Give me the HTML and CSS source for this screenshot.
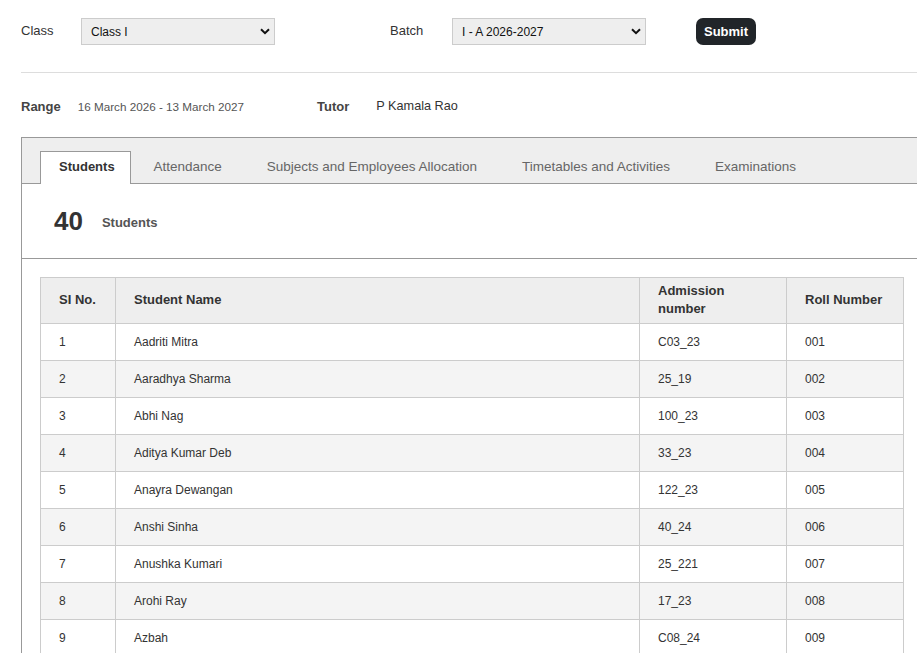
FILE: index.html
```html
<!DOCTYPE html>
<html lang="en">

<head>
    <meta charset="UTF-8">
    <meta name="viewport" content="width=device-width, initial-scale=1.0">
    <title>Class Students</title>
    <link rel="stylesheet" href="styles.css">
</head>

<body>
    <div class="page">
        <div class="filters">
            <label class="label">Class</label>
            <div class="select-wrap">
                <select class="select">
                    <option>Class I</option>
                </select>
                <svg class="chevron" width="10" height="7" viewBox="0 0 10 7">
                    <path d="M1 1.2 L5 5.2 L9 1.2" fill="none" stroke="#111" stroke-width="2" />
                </svg>
            </div>
            <label class="label label-batch">Batch</label>
            <div class="select-wrap">
                <select class="select">
                    <option>I - A 2026-2027</option>
                </select>
                <svg class="chevron" width="10" height="7" viewBox="0 0 10 7">
                    <path d="M1 1.2 L5 5.2 L9 1.2" fill="none" stroke="#111" stroke-width="2" />
                </svg>
            </div>
            <button class="btn">Submit</button>
        </div>

        <hr class="divider">

        <div class="meta">
            <span class="meta-label">Range</span>
            <span class="meta-range">16 March 2026 - 13 March 2027</span>
            <span class="meta-label meta-tutor">Tutor</span>
            <span class="meta-value">P Kamala Rao</span>
        </div>

        <div class="panel">
            <ul class="tabs">
                <li class="tab active">Students</li>
                <li class="tab">Attendance</li>
                <li class="tab">Subjects and Employees Allocation</li>
                <li class="tab">Timetables and Activities</li>
                <li class="tab">Examinations</li>
            </ul>

            <div class="count">
                <span class="count-num">40</span>
                <span class="count-text">Students</span>
            </div>

            <div class="table-box">
                <table class="students">
                    <colgroup>
                        <col style="width:75px">
                        <col style="width:524px">
                        <col style="width:147px">
                        <col style="width:117px">
                    </colgroup>
                    <thead>
                        <tr>
                            <th>SI No.</th>
                            <th>Student Name</th>
                            <th>Admission number</th>
                            <th>Roll Number</th>
                        </tr>
                    </thead>
                    <tbody>
                        <tr><td>1</td><td>Aadriti Mitra</td><td>C03_23</td><td>001</td></tr>
                        <tr><td>2</td><td>Aaradhya Sharma</td><td>25_19</td><td>002</td></tr>
                        <tr><td>3</td><td>Abhi Nag</td><td>100_23</td><td>003</td></tr>
                        <tr><td>4</td><td>Aditya Kumar Deb</td><td>33_23</td><td>004</td></tr>
                        <tr><td>5</td><td>Anayra Dewangan</td><td>122_23</td><td>005</td></tr>
                        <tr><td>6</td><td>Anshi Sinha</td><td>40_24</td><td>006</td></tr>
                        <tr><td>7</td><td>Anushka Kumari</td><td>25_221</td><td>007</td></tr>
                        <tr><td>8</td><td>Arohi Ray</td><td>17_23</td><td>008</td></tr>
                        <tr><td>9</td><td>Azbah</td><td>C08_24</td><td>009</td></tr>
                        <tr><td>10</td><td>Bhavya Singh</td><td>51_23</td><td>010</td></tr>
                        <tr><td>11</td><td>Debanshi Roy</td><td>64_23</td><td>011</td></tr>
                    </tbody>
                </table>
            </div>
        </div>
    </div>
</body>

</html>
```

FILE: styles.css
```css
* {
    margin: 0;
    padding: 0;
    box-sizing: border-box;
    list-style: none;
}

html,
body {
    overflow: hidden;
}

body {
    font-family: "Liberation Sans", Arial, sans-serif;
    color: #333;
    background: #fff;
}

.page {
    width: 922px;
    padding: 18px 0 0 21px;
}

/* top filter row */
.filters {
    display: flex;
    align-items: center;
    height: 27px;
}

.label {
    width: 60px;
    font-size: 13px;
    color: #333;
    margin-top: -3px;
}

.label-batch {
    margin-left: 115px;
    width: 62px;
}

.select-wrap {
    position: relative;
    width: 194px;
    height: 27px;
}

.select {
    appearance: none;
    -webkit-appearance: none;
    width: 100%;
    height: 100%;
    background: #eee;
    border: 1px solid #ccc;
    border-radius: 0;
    padding: 0 0 0 9px;
    font-family: "Liberation Sans", Arial, sans-serif;
    font-size: 12px;
    color: #111;
    outline: none;
}

.chevron {
    position: absolute;
    right: 5px;
    top: 10px;
    pointer-events: none;
}

.btn {
    margin-left: 50px;
    width: 60px;
    height: 27px;
    border: 0;
    border-radius: 7px;
    background: #212529;
    color: #fff;
    font-family: "Liberation Sans", Arial, sans-serif;
    font-size: 13px;
    font-weight: bold;
    margin-top: -1px;
}

.divider {
    border: 0;
    border-top: 1px solid #ddd;
    margin-top: 27px;
}

/* range / tutor */
.meta {
    display: flex;
    align-items: center;
    height: 20px;
    margin-top: 23px;
}

.meta-label {
    font-size: 13px;
    font-weight: bold;
    color: #444;
}

.meta-range {
    margin-left: 17px;
    font-size: 11.7px;
    color: #555;
}

.meta-tutor {
    margin-left: 73px;
}

.meta-value {
    margin-left: 27px;
    font-size: 12.7px;
    color: #333;
}

/* tabbed panel */
.panel {
    margin-top: 21px;
    border: 1px solid #999;
    border-right: 0;
}

.tabs {
    display: flex;
    background: #eee;
    border-bottom: 1px solid #999;
    padding: 13px 0 0 18px;
}

.tab {
    height: 33px;
    line-height: 29px;
    padding: 0 21.5px;
    margin-bottom: -1px;
    border: 1px solid transparent;
    border-bottom: 0;
    font-size: 13.5px;
    color: #666;
}

.tab.active {
    width: 91px;
    background: #fff;
    border-color: #999;
    color: #333;
    font-size: 13px;
    font-weight: bold;
    padding: 0 0 0 18px;
}

.count {
    display: flex;
    align-items: center;
    height: 75px;
    padding: 0 0 0 32px;
    border-bottom: 1px solid #999;
}

.count-num {
    font-size: 26px;
    font-weight: bold;
    color: #333;
}

.count-text {
    margin-left: 19px;
    margin-top: 2px;
    font-size: 13px;
    font-weight: bold;
    color: #555;
}

.table-box {
    padding: 18px 18px 0;
}

.students {
    width: 863px;
    table-layout: fixed;
    border-collapse: collapse;
    font-size: 12px;
    color: #333;
}

.students th,
.students td {
    border: 1px solid #ccc;
    text-align: left;
    padding: 0 18px;
}

.students th {
    background: #eee;
    font-size: 13px;
    font-weight: bold;
    line-height: 18px;
    height: 46px;
    padding-bottom: 1px;
}

.students td {
    height: 37px;
    line-height: 16px;
}

.students tbody tr:nth-child(even) td {
    background: #f4f4f4;
}
```
